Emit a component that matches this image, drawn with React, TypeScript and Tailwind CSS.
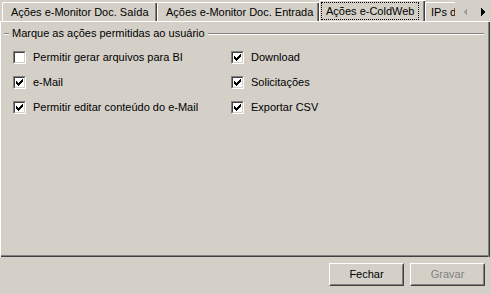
import React from "react";

function Check({ checked }: { checked: boolean }) {
  return (
    <span className="block w-[13px] h-[13px] shrink-0 border border-t-[#808080] border-l-[#808080] border-r-white border-b-white">
      <span className="block w-[11px] h-[11px] bg-white border border-t-[#404040] border-l-[#404040] border-r-[#d4d0c8] border-b-[#d4d0c8] relative">
        {checked && (
          <svg width="7" height="7" viewBox="0 0 7 7" className="absolute left-[1px] top-[1px]" shapeRendering="crispEdges">
            <rect x="6" y="0" width="1" height="1" fill="#000" />
            <rect x="5" y="1" width="2" height="1" fill="#000" />
            <rect x="0" y="2" width="1" height="1" fill="#000" />
            <rect x="4" y="2" width="3" height="1" fill="#000" />
            <rect x="0" y="3" width="2" height="1" fill="#000" />
            <rect x="3" y="3" width="3" height="1" fill="#000" />
            <rect x="0" y="4" width="5" height="1" fill="#000" />
            <rect x="1" y="5" width="3" height="1" fill="#000" />
            <rect x="2" y="6" width="1" height="1" fill="#000" />
          </svg>
        )}
      </span>
    </span>
  );
}

function Item({ checked, label }: { checked: boolean; label: string }) {
  return (
    <div className="flex items-center h-[25px]">
      <Check checked={checked} />
      <span className="ml-[7px] text-black whitespace-nowrap">{label}</span>
    </div>
  );
}

function Tab({ label, width, selected, tight }: { label: string; width: number; selected?: boolean; tight?: boolean }) {
  if (selected) {
    return (
      <div
        className="relative z-10 h-[22px] -mb-[1px] bg-[#d4d0c8] border-t border-l border-t-white border-l-white rounded-tl-[2px] flex items-start shrink-0"
        style={{ width }}
      >
        <div className="flex-1 h-full flex items-start pl-[1px] pt-[1px]">
          <span className="h-[18px] flex items-center px-[5px] outline outline-1 outline-dotted outline-black -outline-offset-1 leading-none whitespace-nowrap">
            {label}
          </span>
        </div>
        <div className="w-[1px] h-full bg-[#808080]" />
        <div className="w-[1px] h-full bg-[#404040]" />
      </div>
    );
  }
  return (
    <div
      className="h-[19px] bg-[#d4d0c8] border-t border-l border-t-white border-l-white rounded-tl-[2px] flex shrink-0 overflow-hidden"
      style={{ width }}
    >
      <div className={"flex-1 flex items-center whitespace-nowrap leading-none pt-[1px] " + (tight ? "pl-[5px]" : "pl-[8px]")}>
        {label}
      </div>
      <div className="w-[1px] h-full bg-[#808080]" />
      <div className="w-[1px] h-full bg-[#404040]" />
    </div>
  );
}

function Button({ label, disabled }: { label: string; disabled?: boolean }) {
  return (
    <div className="w-[75px] h-[23px] border border-t-white border-l-white border-r-[#404040] border-b-[#404040]">
      <div
        className={
          "w-full h-full border border-t-[#d4d0c8] border-l-[#d4d0c8] border-r-[#808080] border-b-[#808080] flex items-center justify-center " +
          (disabled ? "text-[#808080]" : "text-black")
        }
      >
        {label}
      </div>
    </div>
  );
}

export default function App() {
  return (
    <div className="w-[491px] h-[294px] bg-[#d4d0c8] text-[11px] text-black font-['Liberation_Sans',Arial,sans-serif] overflow-hidden select-none flex flex-col">
      {/* tab strip */}
      <div className="h-[21px] flex items-end relative">
        <div className="flex items-end pl-[2px] h-full overflow-hidden w-[455px] shrink-0">
          <Tab label="Ações e-Monitor Doc. Saída" width={155} />
          <Tab label="Ações e-Monitor Doc. Entrada" width={162} />
          <Tab label="Ações e-ColdWeb" width={106} selected />
          <Tab label="IPs de Acesso" width={80} tight />
        </div>
        <div className="flex-1 h-full flex items-center">
          <svg width="36" height="21" viewBox="0 0 36 21" shapeRendering="crispEdges">
            <polygon points="12,8 8,12 12,16" fill="#a0a0a0" />
            <polygon points="26,8 30,12 26,16" fill="#000" />
          </svg>
        </div>
      </div>

      {/* panel */}
      <div className="w-[490px] h-[236px] border-t border-l border-t-white border-l-white flex shrink-0">
        <div className="flex-1 flex flex-col">
          <div className="h-[1px]" />
          {/* group header */}
          <div className="flex items-center h-[21px] pl-[3px] pr-[4px]">
            <div className="w-[5px] h-[2px] border-t border-t-[#808080] border-b border-b-white" />
            <span className="px-[2px] ml-[1px] whitespace-nowrap">Marque as ações permitidas ao usuário</span>
            <div className="flex-1 h-[2px] border-t border-t-[#808080] border-b border-b-white ml-[1px]" />
          </div>
          <div className="grid grid-cols-[218px_1fr] pl-[12px] pt-[1px]">
            <Item checked={false} label="Permitir gerar arquivos para BI" />
            <Item checked label="Download" />
            <Item checked label="e-Mail" />
            <Item checked label="Solicitações" />
            <Item checked label="Permitir editar conteúdo do e-Mail" />
            <Item checked label="Exportar CSV" />
          </div>
          <div className="flex-1" />
          <div className="h-[1px] bg-[#808080]" />
          <div className="h-[1px] bg-[#404040]" />
        </div>
        <div className="w-[1px] h-full bg-[#808080]" />
        <div className="w-[1px] h-full bg-[#404040]" />
      </div>

      {/* footer */}
      <div className="flex justify-end gap-[6px] pt-[6px] pr-[6px]">
        <Button label="Fechar" />
        <Button label="Gravar" disabled />
      </div>
    </div>
  );
}
